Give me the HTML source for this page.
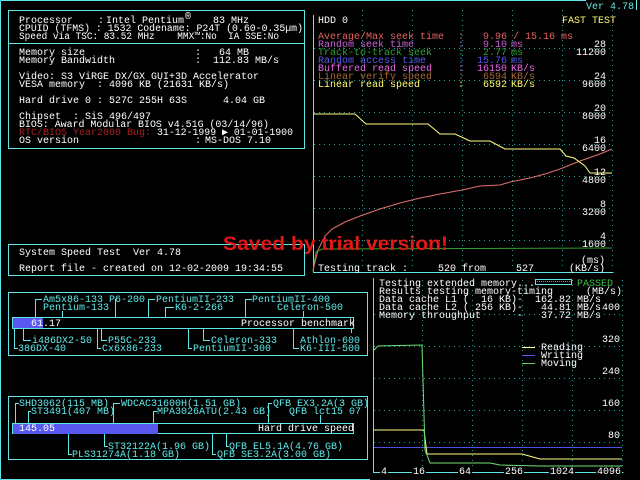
<!DOCTYPE html>
<html><head><meta charset="utf-8"><style>
html,body{margin:0;padding:0;background:#000;width:640px;height:480px;overflow:hidden}
svg{display:block}
text{font-family:"Liberation Mono",monospace;font-size:10px;white-space:pre;stroke:currentColor;stroke-width:0}
.b text{paint-order:stroke}
</style></head><body>
<svg width="640" height="480" viewBox="0 0 640 480" xmlns="http://www.w3.org/2000/svg" xml:space="preserve">
<g fill="none" stroke="#60e8e8" stroke-width="1">
<path d="M0.5 0.5H586 M0.5 0.5V479.5 M0.5 479.5H370 M636.5 0V10"/>
<rect x="8.5" y="10.5" width="296" height="138"/>
<path d="M8.5 43.5H304.5"/>
<rect x="8.5" y="244.5" width="296" height="31"/>
<rect x="8.5" y="292.5" width="359" height="63"/>
<rect x="12.5" y="317.5" width="341" height="11"/>
<rect x="8.5" y="396.5" width="359" height="63"/>
<rect x="12.5" y="423.5" width="341" height="10"/>
<path d="M313.5 15V272.5H613.5 M373.5 278V472.5H623.5"/>
<rect x="535.5" y="279.5" width="36" height="5"/>
</g>
<g style="stroke-width:0.25">
<text x="586" y="9" fill="#60e8e8" stroke="#60e8e8">Ver 4.78</text>
<!-- left info -->
<g fill="#fff" stroke="#fff" stroke-width="0.25">
<text x="19" y="23">Processor</text><text x="98" y="23">:</text><text x="106" y="23">Intel Pentium</text><text x="185" y="19" font-size="7">®</text><text x="213" y="23">83 MHz</text>
<text x="19" y="31" textLength="284" lengthAdjust="spacingAndGlyphs">CPUID (TFMS) : 1532 Codename: P24T (0.60-0.35µm)</text>
<text x="19" y="39" textLength="260" lengthAdjust="spacingAndGlyphs">Speed via TSC: 83.52 MHz    MMX™:No  IA SSE:No</text>
<text x="19" y="55">Memory size</text><text x="195" y="55">:</text><text x="249" y="55" text-anchor="end">64 MB</text>
<text x="19" y="63">Memory Bandwidth</text><text x="195" y="63">:</text><text x="213" y="63">112.83 MB/s</text>
<text x="19" y="79">Video: S3 ViRGE DX/GX GUI+3D Accelerator</text>
<text x="19" y="87">VESA memory  : 4096 KB (21631 KB/s)</text>
<text x="19" y="103">Hard drive 0 : 527C 255H 63S      4.04 GB</text>
<text x="19" y="119">Chipset  : SiS 496/497</text>
<text x="19" y="127" textLength="250" lengthAdjust="spacingAndGlyphs">BIOS: Award Modular BIOS v4.51G (03/14/96)</text>
<text x="19" y="135" fill="#a82020" stroke="#a82020">RTC/BIOS Year2000 Bug:</text><text x="157" y="135" textLength="136" lengthAdjust="spacingAndGlyphs">31-12-1999 ▶ 01-01-1900</text>
<text x="19" y="143">OS version</text><text x="195" y="143">:</text><text x="205" y="143">MS-DOS 7.10</text>
<text x="19" y="255">System Speed Test  Ver 4.78</text>
<text x="19" y="271">Report file - created on 12-02-2009 19:34:55</text>
</g>
</g>
<!-- HDD grid -->
<g stroke="#20a0a0" stroke-width="1" stroke-dasharray="1 4" fill="none">
<path d="M362.5 10V266 M412.5 10V266 M462.5 10V266 M512.5 10V266 M562.5 10V266 M612.5 10V266"/>
<path d="M314 48.5H612 M314 80.5H612 M314 112.5H612 M314 144.5H612 M314 176.5H612 M314 208.5H612 M314 240.5H612"/>
<path d="M422.5 280V470 M472.5 280V470 M522.5 280V470 M572.5 280V470 M622.5 280V470"/>
<path d="M374 314.5H622 M374 346.5H622 M374 378.5H622 M374 410.5H622 M374 442.5H622"/>
</g>
<polyline fill="none" stroke="#30a030" points="313,272 316,252 322,249 612,248"/>
<polyline fill="none" stroke="#e07070" points="313,270 318,250 325,236 332,229 345,222 360,216 380,209 400,203 420,198 440,194 462,190 480,186 500,185 510,182 530,178 545,174 560,169 580,161 600,154 612,149"/>
<polyline fill="none" stroke="#ffff80" points="313,114 355,114 366,124 428,124 440,134 455,134 470,141 490,141 505,149 560,149 566,156 574,158 585,166 590,173 612,173"/>
<g stroke-width="0.25">
<text x="318" y="23" fill="#fff" stroke="#fff">HDD 0</text><text x="562" y="23" fill="#ffff70" stroke="#ffff70">FAST TEST</text>
<g fill="#e86060" stroke="#e86060"><text x="318" y="39">Average/Max seek time</text><text x="458" y="39">:</text><text x="483" y="39">9.96 / 15.16 ms</text></g>
<g fill="#d060d8" stroke="#d060d8"><text x="318" y="47">Random seek time</text><text x="458" y="47">:</text><text x="507" y="47" text-anchor="end">9.10</text><text x="511" y="47">ms</text></g>
<g fill="#30a030" stroke="#30a030"><text x="318" y="55">Track-to-track seek</text><text x="458" y="55">:</text><text x="507" y="55" text-anchor="end">2.77</text><text x="511" y="55">ms</text></g>
<g fill="#5858f0" stroke="#5858f0"><text x="318" y="63">Random access time</text><text x="458" y="63">:</text><text x="507" y="63" text-anchor="end">15.76</text><text x="511" y="63">ms</text></g>
<g fill="#e868e8" stroke="#e868e8"><text x="318" y="71">Buffered read speed</text><text x="458" y="71">:</text><text x="507" y="71" text-anchor="end">16150</text><text x="511" y="71">KB/s</text></g>
<g fill="#a86830" stroke="#a86830"><text x="318" y="79">Linear verify speed</text><text x="458" y="79">:</text><text x="507" y="79" text-anchor="end">6594</text><text x="511" y="79">KB/s</text></g>
<g fill="#ffff70" stroke="#ffff70"><text x="318" y="87">Linear read speed</text><text x="458" y="87">:</text><text x="507" y="87" text-anchor="end">6592</text><text x="511" y="87">KB/s</text></g>
</g>
<g fill="#fff" stroke="#fff" stroke-width="0.25" text-anchor="end">
<text x="606" y="47">28</text><text x="606" y="55">11200</text>
<text x="606" y="79">24</text><text x="606" y="87">9600</text>
<text x="606" y="111">20</text><text x="606" y="119">8000</text>
<text x="606" y="143">16</text><text x="606" y="151">6400</text>
<text x="606" y="175">12</text><text x="606" y="183">4800</text>
<text x="606" y="207">8</text><text x="606" y="215">3200</text>
<text x="606" y="239">4</text><text x="606" y="247">1600</text>
<text x="605" y="263">(ms)</text><text x="605" y="271">(KB/s)</text>
</g>
<text x="318" y="271" fill="#fff" stroke="#fff" stroke-width="0.25">Testing track :     520 from     527</text>
<text x="223" y="250" fill="#e01818" style="font-family:'Liberation Sans',sans-serif;font-weight:bold;font-size:19px" textLength="225" lengthAdjust="spacingAndGlyphs">Saved by trial version!</text>
<!-- memory -->
<g fill="#fff" stroke="#fff" stroke-width="0.25">
<text x="379" y="286">Testing extended memory...</text>
<text x="577" y="286" fill="#40c040" stroke="#40c040">PASSED</text>
<text x="379" y="294">Results testing memory-timing</text><text x="622" y="294" text-anchor="end">(MB/s)</text>
<text x="379" y="302">Data cache L1 (  16 KB)-  162.82 MB/s</text>
<text x="379" y="310">Data cache L2 ( 256 KB)-   44.81 MB/s</text>
<text x="379" y="318">Memory throughput      -   37.72 MB/s</text>
<text x="620" y="310" text-anchor="end">400</text>
<text x="620" y="342" text-anchor="end">320</text>
<text x="620" y="374" text-anchor="end">240</text>
<text x="620" y="406" text-anchor="end">160</text>
<text x="620" y="438" text-anchor="end">80</text>
<text x="541" y="350">Reading</text><text x="541" y="358">Writing</text><text x="541" y="366">Moving</text>
</g>
<path d="M537 281.5H570" stroke="#40c040" stroke-dasharray="1 1"/>
<path d="M522 347.5H535" stroke="#ffff80"/><path d="M522 355.5H535" stroke="#5858f0"/><path d="M522 363.5H535" stroke="#60d060"/>
<path d="M374 447.5H622" stroke="#5050e0"/>
<polyline fill="none" stroke="#ffff80" points="374,430 424,430 427,454 522,454 540,459 622,459"/>
<polyline fill="none" stroke="#70e070" points="374,350 378,346 422,345 425,450 430,463 490,463 500,465 540,466 622,466"/>
<rect x="380" y="467" width="8" height="8" fill="#000"/>
<rect x="412" y="467" width="14" height="8" fill="#000"/>
<rect x="458" y="467" width="14" height="8" fill="#000"/>
<rect x="504" y="467" width="20" height="8" fill="#000"/>
<rect x="549" y="467" width="26" height="8" fill="#000"/>
<rect x="596" y="467" width="26" height="8" fill="#000"/>
<g fill="#fff" stroke="#fff" stroke-width="0.25">
<text x="381" y="474">4</text><text x="413" y="474">16</text><text x="459" y="474">64</text><text x="505" y="474">256</text>
<text x="550" y="474">1024</text><text x="597" y="474">4096</text>
</g>
<!-- processor benchmark -->
<rect x="13" y="318" width="30" height="10" fill="#5858f0"/>
<rect x="13" y="424" width="145" height="10" fill="#5858f0"/>
<g fill="none" stroke="#60e8e8">
<path d="M35.5 317V299.5H42 M115.5 317V299 M148.5 317V299.5H155 M165.5 317V307.5H174 M245.5 317V299.5H252 M303.5 317V311 M62.5 317V311"/>
<path d="M14.5 329V348.5H18 M23.5 329V340.5H31 M97.5 329V348.5H101 M101.5 329V340.5H107 M188.5 329V348.5H192 M203.5 329V340.5H210 M293.5 329V348.5H299 M351.5 329V333"/>
<path d="M15.5 423V403.5H19 M28.5 423V411.5H31 M113.5 423V403.5H120 M153.5 423V411.5H157 M268.5 423V403.5H272 M320.5 423V415"/>
<path d="M68.5 434V454.5H72 M104.5 434V446.5H108 M212.5 434V454.5H216 M226.5 434V446.5H229"/>
</g>
<g fill="#60e8e8" stroke="#60e8e8" stroke-width="0.25">
<text x="43" y="302">Am5x86-133 P6-200</text><text x="156" y="302">PentiumII-233</text><text x="252" y="302">PentiumII-400</text>
<text x="43" y="310">Pentium-133</text><text x="175" y="310">K6-2-266</text><text x="277" y="310">Celeron-500</text>
<text x="31" y="326" fill="#fff" stroke="#fff">61.17</text><text x="241" y="326" fill="#fff" stroke="#fff">Processor benchmark</text>
<text x="32" y="343">i486DX2-50</text><text x="108" y="343">P55C-233</text><text x="211" y="343">Celeron-333</text><text x="300" y="343">Athlon-600</text>
<text x="18" y="351">386DX-40</text><text x="102" y="351">Cx6x86-233</text><text x="193" y="351">PentiumII-300</text><text x="300" y="351">K6-III-500</text>
<text x="19" y="406">SHD3062(115 MB)</text><text x="121" y="406">WDCAC31600H(1.51 GB)</text><text x="273" y="406">QFB EX3.2A(3 GB)</text>
<text x="31" y="414">ST3491(407 MB)</text><text x="157" y="414">MPA3026ATU(2.43 GB)</text><text x="289" y="414">QFB lct15 07</text>
<text x="19" y="431" fill="#fff" stroke="#fff">145.05</text><text x="258" y="431" fill="#fff" stroke="#fff">Hard drive speed</text>
<text x="108" y="449">ST32122A(1.96 GB)</text><text x="229" y="449">QFB EL5.1A(4.76 GB)</text>
<text x="72" y="457">PLS31274A(1.18 GB)</text><text x="217" y="457">QFB SE3.2A(3.00 GB)</text>
</g>
</svg>
</body></html>
